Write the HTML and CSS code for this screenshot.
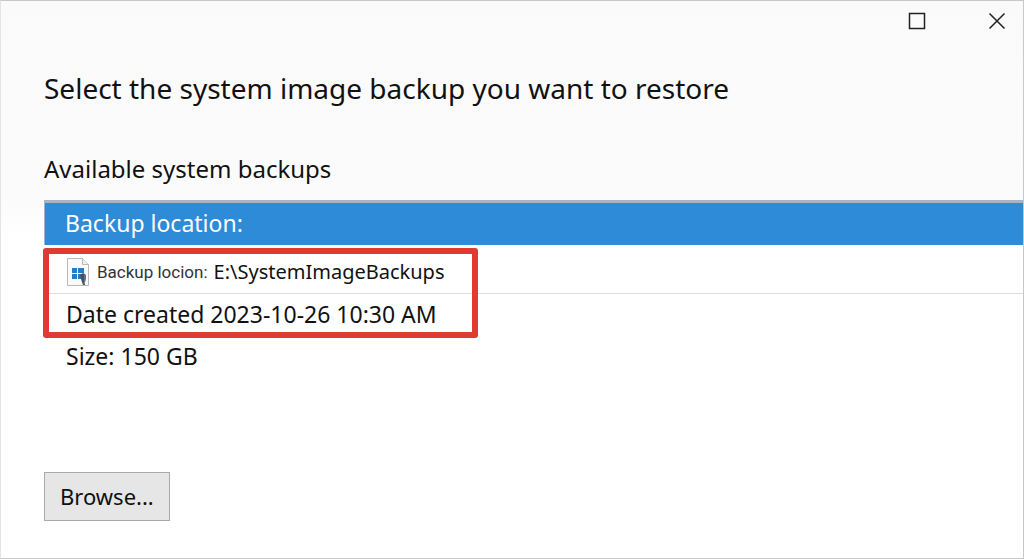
FILE: index.html
```
<!DOCTYPE html>
<html lang="en">
<head>
  <meta charset="UTF-8" />
  <meta name="viewport" content="width=device-width, initial-scale=1.0" />
  <title>Select a system image backup</title>
  <link rel="stylesheet" href="styles.css">
</head>
<body>
  <header class="titlebar">
    <button class="window-button" type="button" aria-label="Maximize">
      <svg width="18" height="18" viewBox="0 0 18 18"><rect x="1.5" y="1.5" width="15" height="15" /></svg>
    </button>
    <button class="window-button" type="button" aria-label="Close">
      <svg width="18" height="18" viewBox="0 0 18 18"><path d="M1.5 1.5l15 15M16.5 1.5l-15 15" /></svg>
    </button>
  </header>

  <main>
    <h1>Select the system image backup you want to restore</h1>
    <h2 id="backupsLabel">Available system backups</h2>

    <div class="backups">
      <table aria-labelledby="backupsLabel">
        <thead>
          <tr><th scope="col">Backup location:</th></tr>
        </thead>
        <tbody>
          <tr>
            <td>
              <div class="location">
                <svg class="file-icon" width="24" height="30" viewBox="0 0 24 30">
                  <path d="M1.5 1.5h15l6 6v21h-21z" fill="#fafafa" stroke="#b8b8b8" />
                  <path d="M16.5 1.5v6h6" fill="#eeeeee" stroke="#b8b8b8" />
                  <path d="M6 11h5v5H6zM12 11h6v5h-6zM6 17h5v5H6zM12 17h6v5h-6z" fill="#1f7fc9" />
                  <path d="M14 18l3-2 3 2v4l-1 2v4h-2l-2-6z" fill="#46505f" />
                  <path d="M19 18v6l-1 3" fill="none" stroke="#8793a3" />
                </svg>
                <span class="location-label">Backup locion:</span>
                <span class="location-path">E:\SystemImageBackups</span>
              </div>
            </td>
          </tr>
          <tr><td>Date created 2023-10-26 10:30 AM</td></tr>
          <tr><td>Size: 150 GB</td></tr>
        </tbody>
      </table>
      <div class="highlight"></div>
    </div>

    <button class="browse" type="button">Browse...</button>
  </main>
</body>
</html>
```
FILE: styles.css
```
* {
  box-sizing: border-box;
}

body {
  margin: 0;
  min-height: 100vh;
  font-family: "Noto Sans", "Open Sans", sans-serif;
  font-size: 23px;
  color: #111;
  background: linear-gradient(#fafafa, #fbfbfb 200px, #fff 240px);
  border: 1px solid #c8c8c8;
  border-left-color: #e4e4e4;
}

.titlebar {
  display: flex;
  justify-content: flex-end;
  height: 40px;
}

.window-button {
  width: 80px;
  padding: 0;
  border: none;
  background: none;
}

.window-button:last-child {
  width: 52px;
  margin-left: 14px;
}

.window-button svg {
  display: block;
  margin: 0 auto;
  fill: none;
  stroke: #222;
  stroke-width: 1.5;
}

main {
  padding-left: 43px;
}

h1 {
  margin: 27px 0 0;
  font-size: 28px;
  font-weight: 400;
  line-height: 40px;
}

h2 {
  margin: 43px 0 0;
  font-size: 24px;
  font-weight: 400;
  line-height: 36px;
}

.backups {
  position: relative;
  margin-top: 13px;
}

table {
  width: 100%;
  border-collapse: separate;
  border-spacing: 0;
  border-top: 3px solid #a3b5c6;
}

th {
  height: 42px;
  padding: 0 20px 2px;
  font-weight: 400;
  line-height: 36px;
  text-align: left;
  color: #fff;
  background: #2e8bd8;
  border-left: 1px solid #a3b5c6;
}

td {
  height: 42px;
  padding: 0 22px 3px;
  line-height: 36px;
}

tbody tr:first-child td {
  height: 49px;
  padding-top: 8px;
  border-bottom: 1px solid #dedede;
}

.location {
  display: flex;
  align-items: center;
  font-size: 20px;
}

.file-icon {
  margin-right: 7px;
}

.location-label {
  margin-right: 6px;
  font-family: Roboto, "Open Sans", sans-serif;
  font-size: 17px;
  color: #333;
}

.highlight {
  position: absolute;
  top: 48px;
  left: -1px;
  width: 435px;
  height: 90px;
  border: 6px solid #df3a36;
  border-radius: 3px;
}

.browse {
  margin-top: 94px;
  padding: 0 15px 2px;
  height: 49px;
  font: inherit;
  font-size: 22px;
  color: #111;
  background: #e6e6e6;
  border: 1px solid #aaa;
}
```
